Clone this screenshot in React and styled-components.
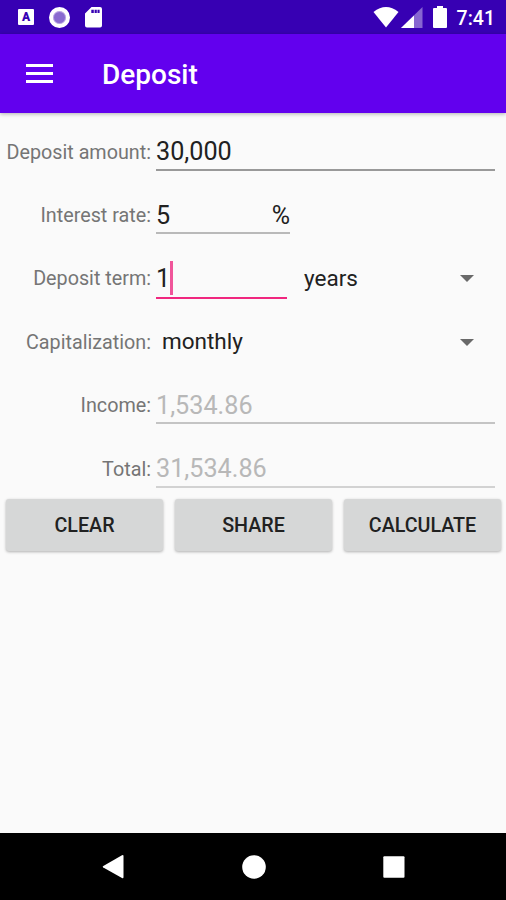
import React, { useState } from 'react';
import styled, { createGlobalStyle } from 'styled-components';


const App = () => {
    const [amount] = useState('30,000'), [rate] = useState('5'), [term] = useState('1');

    return <StyledScreen>
        <GlobalStyle />
        <StatusBar />
        <StyledToolbar>
            <StyledMenuIcon>
                <span />
                <span />
                <span />
            </StyledMenuIcon>
            <StyledTitle>Deposit</StyledTitle>
        </StyledToolbar>
        <StyledForm>
            <StyledRow>
                <StyledLabel>Deposit amount:</StyledLabel>
                <StyledField>{amount}</StyledField>
            </StyledRow>
            <StyledRow>
                <StyledLabel>Interest rate:</StyledLabel>
                <StyledField width={134} line="#b9b9b9">
                    {rate}
                    <StyledPercent>%</StyledPercent>
                </StyledField>
            </StyledRow>
            <StyledRow>
                <StyledLabel>Deposit term:</StyledLabel>
                <StyledField width={131} focused>
                    {term}
                    <StyledCursor />
                </StyledField>
                <StyledSpinner indent={17}>
                    years
                    <StyledArrow />
                </StyledSpinner>
            </StyledRow>
            <StyledRow>
                <StyledLabel>Capitalization:</StyledLabel>
                <StyledSpinner indent={6}>
                    monthly
                    <StyledArrow />
                </StyledSpinner>
            </StyledRow>
            <StyledRow>
                <StyledLabel>Income:</StyledLabel>
                <StyledField disabled line="#c4c4c4">1,534.86</StyledField>
            </StyledRow>
            <StyledRow>
                <StyledLabel>Total:</StyledLabel>
                <StyledField disabled line="#d2d2d2">31,534.86</StyledField>
            </StyledRow>
            <StyledActions>
                <StyledButton>CLEAR</StyledButton>
                <StyledButton>SHARE</StyledButton>
                <StyledButton>CALCULATE</StyledButton>
            </StyledActions>
        </StyledForm>
        <NavigationBar />
    </StyledScreen>
};

const StatusBar = () => {
    return <StyledStatusBar>
        <StyledLetterBox>A</StyledLetterBox>
        <StyledRecord />
        <svg width="17" height="21" viewBox="0 0 17 21">
            <path fill="#fff" fillRule="evenodd" d="M6.5 0H15Q17 0 17 2V18.5Q17 20.5 15 20.5H2Q0 20.5 0 18.5V6.5ZM6.3 2.8V6H8.8V2.8ZM9.6 2.8V6H11.8V2.8ZM12.5 2.8V6H14.6V2.8Z" />
        </svg>
        <StyledSystemIcons>
            <svg width="26" height="21" viewBox="0 0 26 21">
                <path fill="#fff" d="M.5 5Q13 -5 25.5 5L13 20.5Z" />
            </svg>
            <svg width="22" height="21" viewBox="0 0 22 21">
                <path fill="#fff" fillOpacity=".4" d="M21.5 0V21H0Z" />
                <path fill="#fff" d="M13 8.4V21H0Z" />
            </svg>
            <svg width="14" height="22" viewBox="0 0 14 22">
                <path fill="#fff" d="M4 0H10V2H13Q14 2 14 3V21Q14 22 13 22H1Q0 22 0 21V3Q0 2 1 2H4Z" />
            </svg>
        </StyledSystemIcons>
        <StyledClock>7:41</StyledClock>
    </StyledStatusBar>
};

const NavigationBar = () => {
    return <StyledNavigationBar>
        <svg width="24" height="26" viewBox="0 0 24 26">
            <path fill="#fff" d="M1.3 12L20 1.2Q21.5 .5 21.5 2V23Q21.5 24.8 20 24L1.3 13.6Q0 12.8 1.3 12Z" />
        </svg>
        <svg width="26" height="24" viewBox="0 0 26 24">
            <circle fill="#fff" cx="12" cy="12" r="11.8" />
        </svg>
        <svg width="22" height="22" viewBox="0 0 22 22">
            <rect fill="#fff" x=".3" y=".3" width="21.2" height="21.4" rx="1" />
        </svg>
    </StyledNavigationBar>
};

const GlobalStyle = createGlobalStyle`
    body {
        margin: 0;
        background-color: #fafafa;
    }
    * {
        box-sizing: border-box;
    }
`;

const StyledScreen = styled.div`
    width: 506px;
    height: 900px;
    display: flex;
    flex-direction: column;
    overflow: hidden;
    font-family: Roboto, "Liberation Sans", sans-serif;
    color: #212121;
    background-color: #fafafa;
`;

const StyledStatusBar = styled.div`
    height: 34px;
    flex-shrink: 0;
    display: flex;
    align-items: center;
    padding: 0px 11px 0px 18px;
    background-color: #3700b3;
`;

const StyledLetterBox = styled.div`
    width: 16px;
    height: 16px;
    margin-right: 15px;
    border-radius: 1px;
    font-size: 12px;
    font-weight: 900;
    line-height: 16px;
    text-align: center;
    color: #3700b3;
    background-color: white;
`;

const StyledRecord = styled.div`
    width: 21px;
    height: 21px;
    margin-right: 15px;
    border: 4px solid white;
    border-radius: 50%;
    background-color: #8a6bd0;
    box-shadow: inset 0 0 0 1px #b9a5e4;
`;

const StyledSystemIcons = styled.div`
    display: flex;
    align-items: center;
    margin-left: auto;
    svg:nth-child(2) {
        margin: 0px 10px 0px 2px;
    }
`;

const StyledClock = styled.div`
    margin-left: 10px;
    padding-top: 3px;
    font-size: 19.5px;
    font-weight: 500;
    line-height: 31px;
    color: white;
`;

const StyledToolbar = styled.div`
    height: 79px;
    flex-shrink: 0;
    display: flex;
    align-items: center;
    padding-left: 26px;
    color: white;
    background-color: #6200ee;
    box-shadow: 0px 1px 4px rgba(0, 0, 0, 0.3);
`;

const StyledMenuIcon = styled.div`
    width: 27px;
    height: 19px;
    display: flex;
    flex-direction: column;
    justify-content: space-between;
    span {
        height: 3px;
        background-color: white;
    }
`;

const StyledTitle = styled.h1`
    margin: 2px 0px 0px 49px;
    font-size: 28px;
    font-weight: 500;
`;

const StyledForm = styled.div`
    flex: 1;
    padding-top: 6px;
`;

const StyledRow = styled.div`
    height: 63.4px;
    display: flex;
    align-items: center;
    padding-right: 11px;
`;

const StyledLabel = styled.div`
    width: 151px;
    margin-right: 5px;
    padding-top: 3px;
    flex-shrink: 0;
    font-size: 19.75px;
    text-align: right;
    white-space: nowrap;
    color: #757575;
`;

const StyledField = styled.div.withConfig({
    shouldForwardProp: prop => !['width', 'line', 'focused', 'disabled'].includes(prop)
})`
    width: ${props => props.width ? `${props.width}px` : "100%"};
    height: ${props => props.focused ? "43px" : "40px"};
    display: flex;
    align-items: center;
    padding-top: ${props => props.focused ? "5px" : "4px"};
    font-size: 25.2px;
    line-height: 33px;
    color: ${props => props.disabled ? "#b8b8b8" : "#212121"};
    border-bottom: 2px solid ${props => props.focused ? "#f0277f" : props.line || "#999999"};
`;

const StyledPercent = styled.span`
    margin-left: auto;
    font-size: 25px;
`;

const StyledCursor = styled.span`
    width: 3px;
    height: 34px;
    margin: -2px 0px 0px 0px;
    background-color: #f0559a;
`;

const StyledSpinner = styled.div.withConfig({
    shouldForwardProp: prop => prop !== 'indent'
})`
    flex: 1;
    display: flex;
    align-items: center;
    justify-content: space-between;
    padding: 1px 21px 0px ${props => props.indent}px;
    font-size: 22.5px;
`;

const StyledArrow = styled.span`
    margin-top: 2px;
    border-left: 7px solid transparent;
    border-right: 7px solid transparent;
    border-top: 7px solid #696969;
`;

const StyledActions = styled.div`
    display: flex;
    gap: 12px;
    padding: 0px 5px 0px 6px;
`;

const StyledButton = styled.button`
    flex: 1 1 0;
    height: 52px;
    padding: 0px;
    border: none;
    border-radius: 3px;
    font-family: inherit;
    font-size: 19.7px;
    font-weight: 500;
    color: #212121;
    background-color: #d6d7d7;
    box-shadow: 0px 1px 3px rgba(0, 0, 0, 0.3);
`;

const StyledNavigationBar = styled.div`
    height: 67px;
    flex-shrink: 0;
    display: flex;
    align-items: center;
    justify-content: space-between;
    padding: 0px 101px 0px 102px;
    background-color: black;
`;

export default App;
